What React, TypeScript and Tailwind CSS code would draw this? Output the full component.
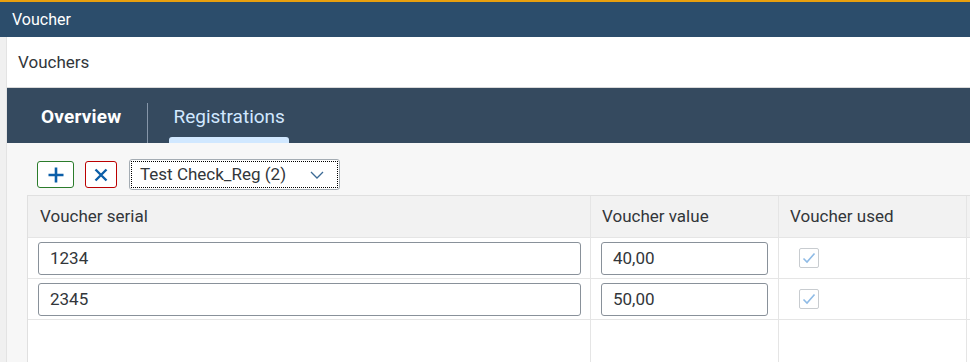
import { useState } from 'react';

type Registration = {
  id: number;
  serial: string;
  value: string;
  used: boolean;
};

const initialRows: Registration[] = [
  { id: 1, serial: '1234', value: '40,00', used: true },
  { id: 2, serial: '2345', value: '50,00', used: true },
];

function PlusIcon() {
  return (
    <svg width="18" height="18" viewBox="0 0 18 18">
      <path d="M9 1.5v15M1.5 9h15" stroke="#0b5ea8" strokeWidth="2.6" />
    </svg>
  );
}

function CloseIcon() {
  return (
    <svg width="14" height="14" viewBox="0 0 14 14">
      <path d="M1.5 1.5l11 11M12.5 1.5l-11 11" stroke="#0b5ea8" strokeWidth="2.4" />
    </svg>
  );
}

function ChevronDown() {
  return (
    <svg width="14" height="8" viewBox="0 0 14 8">
      <path d="M1 1l6 6 6-6" fill="none" stroke="#3b6a95" strokeWidth="1.3" />
    </svg>
  );
}

export default function App() {
  const [rows, setRows] = useState<Registration[]>(initialRows);
  const [tab, setTab] = useState<'overview' | 'registrations'>('registrations');

  const updateRow = (id: number, key: 'serial' | 'value', val: string) => {
    setRows((prev) => prev.map((r) => (r.id === id ? { ...r, [key]: val } : r)));
  };

  return (
    <div className="w-[970px] h-[362px] overflow-hidden bg-white text-[#32363a] font-['Roboto',sans-serif] flex flex-col">
      <div className="h-[2px] bg-[#e9a00e]" />
      <div className="h-[35px] bg-[#2c4d6b] text-white text-[16px] pl-[12px] flex items-center">
        Voucher
      </div>

      <div className="flex flex-1 min-h-0">
        <div className="w-[7px] bg-[#f0f0f0] border-r border-[#e3e3e3]" />

        <div className="flex-1 flex flex-col min-w-0">
          <div className="h-[51px] bg-white border-b border-[#d9d9d9] pl-[11px] pt-[2px] flex items-center text-[17px]">
            Vouchers
          </div>

          <div className="h-[55px] bg-[#354a5f] flex items-stretch">
            <button
              onClick={() => setTab('overview')}
              className="pl-[34px] pr-[26px] pt-[3px] text-[19px] font-bold text-white flex items-center tracking-[0.2px]"
            >
              Overview
            </button>
            <div className="w-px bg-[#8696a9] mt-[15px]" />
            <button
              onClick={() => setTab('registrations')}
              className="relative ml-[21px] px-[4px] pt-[3px] text-[19px] text-[#d1e8ff] flex items-center"
            >
              Registrations
              {tab === 'registrations' && (
                <span className="absolute left-0 right-0 bottom-0 h-[6px] rounded-t-[3px] bg-[#d1e8ff]" />
              )}
            </button>
          </div>

          <div className="flex-1 bg-[#f7f7f7] flex flex-col min-h-0">
            <div className="flex items-center pl-[30px] pt-[16px] pb-[5px] h-[52px] gap-[11px]">
              <button className="w-[37px] h-[27px] bg-white border border-[#2b7c2b] rounded-[3px] flex items-center justify-center">
                <PlusIcon />
              </button>
              <button className="w-[32px] h-[27px] bg-white border border-[#bb0000] rounded-[3px] flex items-center justify-center">
                <CloseIcon />
              </button>
              <div className="ml-[1px] w-[211px] h-[31px] bg-white border border-[#a4acb3] rounded-[3px] p-[1px]">
                <div className="h-full border border-dotted border-black flex items-center justify-between pl-[8px] pr-[13px] text-[17px]">
                  <span>Test Check_Reg (2)</span>
                  <ChevronDown />
                </div>
              </div>
            </div>

            <div className="flex-1 ml-[20px] border-t border-l border-[#e0e0e0] bg-white grid grid-cols-[563px_188px_188px_1fr] grid-rows-[42px_41px_41px_1fr] text-[17px]">
              <div className="bg-[#f2f2f2] border-b border-r border-[#e5e5e5] pl-[12px] flex items-center">Voucher serial</div>
              <div className="bg-[#f2f2f2] border-b border-r border-[#e5e5e5] pl-[11px] flex items-center">Voucher value</div>
              <div className="bg-[#f2f2f2] border-b border-r border-[#e5e5e5] pl-[11px] flex items-center">Voucher used</div>
              <div className="bg-[#f2f2f2] border-b border-[#e5e5e5]" />

              {rows.map((row) => (
                <div key={row.id} className="contents">
                  <div className="border-b border-r border-[#e5e5e5] pl-[10px] pr-[9px] flex items-center">
                    <input
                      value={row.serial}
                      onChange={(e) => updateRow(row.id, 'serial', e.target.value)}
                      className="w-full h-[33px] border border-[#89919a] rounded-[3px] px-[11px] text-[17px] text-[#32363a] outline-none bg-white"
                    />
                  </div>
                  <div className="border-b border-r border-[#e5e5e5] pl-[10px] pr-[10px] flex items-center">
                    <input
                      value={row.value}
                      onChange={(e) => updateRow(row.id, 'value', e.target.value)}
                      className="w-full h-[33px] border border-[#89919a] rounded-[3px] px-[11px] text-[17px] text-[#32363a] outline-none bg-white"
                    />
                  </div>
                  <div className="border-b border-r border-[#e5e5e5] pl-[20px] flex items-center">
                    <div className="w-[20px] h-[20px] border border-[#c8ccd0] rounded-[2px] bg-white flex items-center justify-center">
                      {row.used && (
                        <svg width="14" height="12" viewBox="0 0 14 12">
                          <path d="M1.5 6.5l3.5 3.5 7.5-8.5" fill="none" stroke="#8fbbe6" strokeWidth="1.6" />
                        </svg>
                      )}
                    </div>
                  </div>
                  <div className="border-b border-[#e5e5e5]" />
                </div>
              ))}

              <div className="border-r border-[#e5e5e5]" />
              <div className="border-r border-[#e5e5e5]" />
              <div className="border-r border-[#e5e5e5]" />
              <div />
            </div>
          </div>
        </div>
      </div>
    </div>
  );
}
